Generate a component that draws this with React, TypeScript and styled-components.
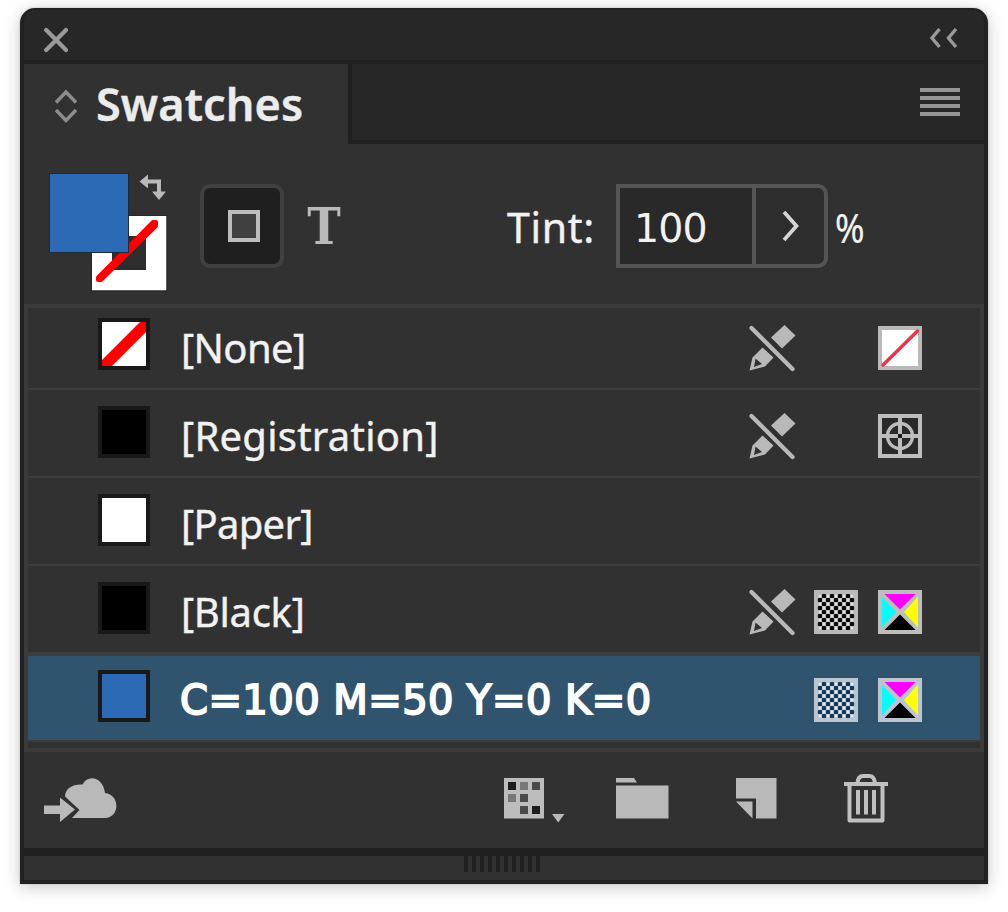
import React from "react";
import styled, { createGlobalStyle, css } from "styled-components";

const GlobalStyle = createGlobalStyle`
  *, *::before, *::after { box-sizing: border-box; }
  html, body { margin: 0; background: #fff; }
  body { font-family: "Noto Sans", "Open Sans", sans-serif; color: #f2f2f2; }
  svg { display: block; flex: none; }
`;

const ICON = "#b9b9b9";

const Stage = styled.main`
  width: 1008px;
  height: 912px;
  padding: 8px 20px 28px;
  overflow: hidden;
`;

const Panel = styled.section`
  display: flex;
  flex-direction: column;
  width: 968px;
  height: 876px;
  border: 4px solid #212121;
  border-top-width: 2px;
  border-radius: 15px 15px 0 0;
  background: #313131;
  box-shadow: 0 3px 17px rgba(0, 0, 0, 0.22), 0 0 2px rgba(0, 0, 0, 0.25);
`;

const TitleBar = styled.header`
  display: flex;
  justify-content: space-between;
  height: 54px;
  padding: 17px 26px 0 20px;
  background: #272727;
  border-bottom: 4px solid #202020;
  border-radius: 12px 12px 0 0;
`;

const TabStrip = styled.div`
  display: flex;
  height: 80px;
`;

const Tab = styled.div`
  display: flex;
  align-items: center;
  gap: 19px;
  width: 324px;
  padding: 3px 0 0 31px;
`;

const TabTitle = styled.h1`
  margin: -3px 0 0;
  font-size: 45px;
  font-weight: 600;
  line-height: 60px;
  letter-spacing: 0.1px;
  color: #ececec;
  -webkit-text-stroke: 0.4px #ececec;
`;

const TabRest = styled.div`
  display: flex;
  flex: 1;
  justify-content: flex-end;
  padding: 23px 23px 0 0;
  background: #272727;
  border-left: 4px solid #1f1f1f;
  border-bottom: 4px solid #202020;
`;

const Controls = styled.div`
  display: flex;
  align-items: flex-start;
  height: 160px;
  padding: 26px 0 0 22px;
`;

const FormatToggle = styled.button`
  display: flex;
  align-items: center;
  justify-content: center;
  width: 84px;
  height: 84px;
  margin: 14px 0 0 30px;
  padding: 0 0 0 3px;
  border: 4px solid #404040;
  border-radius: 10px;
  background: #1f1f1f;
`;

const TextToggle = styled.span`
  width: 40px;
  margin: 27px 0 0 20px;
  font: bold 50px/60px "DejaVu Serif Condensed", "DejaVu Serif", serif;
  font-stretch: condensed;
  text-align: center;
  color: ${ICON};
`;

const Tint = styled.label`
  display: flex;
  align-items: center;
  height: 84px;
  margin: 14px 0 0 162px;
`;

const TintName = styled.span`
  width: 110px;
  padding: 2px 0 0 1px;
  font-size: 41px;
  line-height: 56px;
  letter-spacing: 0.7px;
  -webkit-text-stroke: 0.4px currentColor;
`;

const TintField = styled.span`
  display: flex;
  width: 212px;
  height: 84px;
  border: 4px solid #555;
  border-radius: 0 10px 10px 0;
  background: #2d2d2d;
`;

const TintValue = styled.span`
  width: 136px;
  height: 76px;
  padding: 2px 0 0 14px;
  border-right: 4px solid #555;
  background: #292929;
  font: 39.5px/76px "DejaVu Sans", sans-serif;
  letter-spacing: -0.9px;
`;

const TintStep = styled.span`
  display: flex;
  flex: 1;
  align-items: center;
  justify-content: center;
`;

const Percent = styled.span`
  padding-top: 3px;
  margin-left: 7px;
  font-size: 40px;
  line-height: 56px;
  transform: scaleX(0.89);
  transform-origin: left;
  -webkit-text-stroke: 0.2px currentColor;
`;

const List = styled.ul`
  height: 448px;
  margin: 0;
  padding: 0;
  border: 4px solid #3b3b3b;
  list-style: none;
`;

const Row = styled.li<{ $height: number; $rule: number; $selected?: boolean }>`
  display: flex;
  align-items: flex-end;
  height: ${(p) => p.$height}px;
  padding: 0 58px 18px 70px;
  border-bottom: ${(p) => p.$rule}px solid #3d3d3d;
  background: ${(p) => (p.$selected ? "#30546e" : "transparent")};
`;

const Chip = styled.span<{ $color: string }>`
  width: 52px;
  height: 52px;
  border: 4px solid #191919;
  background: ${(p) => p.$color};
`;

const Name = styled.span<{ $spacing: number; $strong?: boolean }>`
  flex: 1;
  margin: 0 0 -1px 31px;
  font-size: 40px;
  line-height: 46px;
  white-space: nowrap;
  letter-spacing: ${(p) => p.$spacing}px;
  -webkit-text-stroke: 0.4px currentColor;
  ${(p) =>
    p.$strong &&
    css`
      margin-left: 30px;
      font-family: "DejaVu Sans", sans-serif;
      color: #fff;
      -webkit-text-stroke: 1.9px #fff;
    `}
`;

const Marks = styled.span`
  display: flex;
  gap: 20px;
`;

const Slot = styled.span`
  width: 44px;
  height: 44px;
`;

const Footer = styled.footer`
  display: flex;
  height: 96px;
  padding: 22px 95px 0 20px;
`;

const FooterActions = styled.div`
  display: flex;
  margin-left: auto;
`;

const FooterAction = styled.span<{ $gap?: number }>`
  margin-left: ${(p) => p.$gap ?? 0}px;
`;

const GripBar = styled.div`
  display: flex;
  flex: 1;
  justify-content: center;
  border-top: 8px solid #202020;
`;

const Grip = styled.div`
  width: 76px;
  height: 16px;
  margin-right: 4px;
  background: repeating-linear-gradient(to right, #202020 0 4px, #313131 4px 8px);
`;

const NoneChipLine = () => (
  <svg width="44" height="44">
    <path d="M0 38L38 0H44V10L10 44H0Z" fill="#f00" />
  </svg>
);

const NoEdit = () => (
  <svg width="44" height="44" fill={ICON} overflow="visible">
    <path d="M34.500 -1L45.500 9.500L32 22.500L21 11.500Z" />
    <path fillRule="evenodd" d="M12.500 21.500L23.500 31.500L15 40.500L-.5 44.500L2.500 31.500ZM5.500 32.500L12 38L4 41Z" />
    <path d="M1.500 1.500L43 43" stroke="#313131" strokeWidth="8" />
    <path d="M1.500 2L42.500 43" stroke={ICON} strokeWidth="4.200" strokeLinecap="round" />
  </svg>
);

const NoneMark = () => (
  <svg width="44" height="44">
    <rect x="2" y="2" width="40" height="40" fill="#fff" stroke={ICON} strokeWidth="4" />
    <path d="M5 39L39.500 5" stroke="#f52f48" strokeWidth="3.400" strokeLinecap="round" />
  </svg>
);

const RegistrationMark = () => (
  <svg width="44" height="44" fill="none" stroke="#bdbdbd">
    <rect x="2" y="2" width="40" height="40" fill="#292929" strokeWidth="4" />
    <circle cx="22" cy="22" r="12.500" strokeWidth="3.400" />
    <path d="M22 2V42M2 22H42" strokeWidth="4" />
    <rect x="20" y="20" width="4" height="4" fill="#1c1c1c" stroke="none" />
  </svg>
);

const checker = Array.from({ length: 81 }, (_, i) => ({ c: i % 9, r: Math.floor(i / 9) }));

const ProcessMark = ({ selected }: { selected?: boolean }) => (
  <svg width="44" height="44">
    <rect width="44" height="44" fill={selected ? "#b9c6d2" : "#b9b9b9"} />
    {checker.map(({ c, r }) =>
      (c + r) % 2 ? (
        <rect key={`${c}-${r}`} x={3.9 + c * 4} y={3.9 + r * 4} width="4.200" height="4.200" rx="1.200" fill={selected ? "#143652" : "#0a0a0a"} />
      ) : (
        <circle key={`${c}-${r}`} cx={6 + c * 4} cy={6 + r * 4} r="1.500" fill={selected ? "#dcebf5" : "#e0e0e0"} />
      )
    )}
  </svg>
);

const CmykMark = ({ selected }: { selected?: boolean }) => (
  <svg width="44" height="44">
    <rect width="44" height="44" fill={selected ? "#bcc5cf" : "#bdbdbd"} />
    <path d="M6.500 4H37.500L22 19.500Z" fill="#f0f" />
    <path d="M4 6.500L18 22L4 37.500Z" fill="#0ff" />
    <path d="M40 6.500L26 22L40 37.500Z" fill="#ff0" />
    <path d="M6.500 40L22 24.500L37.500 40Z" fill="#000" />
  </svg>
);

const FillStroke = () => (
  <svg width="124" height="124">
    <path fillRule="evenodd" d="M46 46H120.500V120.500H46ZM66 66V100H100V66Z" fill="#fff" />
    <path d="M45.500 45.500H121V121H45.500Z" fill="none" stroke="#262626" />
    <rect x="66" y="66" width="34" height="34" fill="#2d2d2d" />
    <path d="M52 110V107.500L107 52H110V56L55 110Z" fill="#f00" stroke="#f00" strokeWidth="4" strokeLinejoin="round" />
    <rect x="3.500" y="3.500" width="79" height="79" fill="#2d6ab5" stroke="#202b38" />
    <path d="M102 11.500H113V25" fill="none" stroke={ICON} strokeWidth="4" />
    <path d="M93.500 11.500L102 4.500V18.500ZM113 30L106 21.500H120Z" fill={ICON} />
  </svg>
);

type Swatch = {
  name: string;
  color: string;
  height: number;
  rule: number;
  spacing: number;
  none?: boolean;
  selected?: boolean;
  marks: React.ReactNode[];
};

const swatches: Swatch[] = [
  { name: "[None]", color: "#fff", height: 82, rule: 2, spacing: -0.6, none: true, marks: [<NoEdit />, null, <NoneMark />] },
  { name: "[Registration]", color: "#000", height: 88, rule: 2, spacing: 0.25, marks: [<NoEdit />, null, <RegistrationMark />] },
  { name: "[Paper]", color: "#fff", height: 88, rule: 2, spacing: -0.7, marks: [] },
  { name: "[Black]", color: "#000", height: 90, rule: 4, spacing: -0.3, marks: [<NoEdit />, <ProcessMark />, <CmykMark />] },
  { name: "C=100 M=50 Y=0 K=0", color: "#2d6ab5", height: 86, rule: 2, spacing: 0.45, selected: true, marks: [<ProcessMark selected />, <CmykMark selected />] },
];

export default function App() {
  return (
    <Stage>
      <GlobalStyle />
      <Panel>
        <TitleBar>
          <svg width="24" height="26" stroke="#9a9a9a" strokeWidth="4.200" strokeLinecap="round">
            <path d="M2.200 3L22 23M22 3L2.200 23" />
          </svg>
          <svg width="28" height="22" fill="none" stroke="#9a9a9a" strokeWidth="3.400">
            <path d="M9.500 2L2 11L9.500 20M26 2L18.500 11L26 20" />
          </svg>
        </TitleBar>
        <TabStrip>
          <Tab>
            <svg width="22" height="34" fill="none" stroke="#8d8d8d" strokeWidth="3.400">
              <path d="M1 13.500L11 3L21 13.500M1 21L11 31.500L21 21" />
            </svg>
            <TabTitle>Swatches</TabTitle>
          </Tab>
          <TabRest>
            <svg width="42" height="32" stroke="#949494" strokeWidth="4">
              <path d="M1 3H41M1 11H41M1 19H41M1 27H41" />
            </svg>
          </TabRest>
        </TabStrip>
        <Controls>
          <FillStroke />
          <FormatToggle>
            <svg width="32" height="32">
              <rect x="2" y="2" width="28" height="28" fill="#404040" stroke="#bdbdbd" strokeWidth="4" />
            </svg>
          </FormatToggle>
          <TextToggle>T</TextToggle>
          <Tint>
            <TintName>Tint:</TintName>
            <TintField>
              <TintValue>100</TintValue>
              <TintStep>
                <svg width="18" height="32" fill="none" stroke="#d5d5d5" strokeWidth="3.800">
                  <path d="M3 2L15.500 16L3 30" />
                </svg>
              </TintStep>
            </TintField>
            <Percent>%</Percent>
          </Tint>
        </Controls>
        <List>
          {swatches.map((s) => (
            <Row key={s.name} $height={s.height} $rule={s.rule} $selected={s.selected}>
              <Chip $color={s.color}>{s.none && <NoneChipLine />}</Chip>
              <Name $spacing={s.spacing} $strong={s.selected}>{s.name}</Name>
              <Marks>
                {s.marks.map((mark, i) => (
                  <Slot key={i}>{mark}</Slot>
                ))}
              </Marks>
            </Row>
          ))}
        </List>
        <Footer>
          <svg width="74" height="52" fill={ICON}>
            <path d="M28 44L35.500 36L21 22.500C21 15 28 10 38.500 10.500C44 0 59 3 61 19C75 20 77 42 62 44Z" />
            <path d="M0 31.500H16V23.500L31 35.500L16 48V40H0Z" />
          </svg>
          <FooterActions>
            <svg width="62" height="52">
              <rect x="0" y="4" width="40" height="40.500" fill="#bdbdbd" />
              <rect x="4" y="8" width="8" height="8" fill="#1f1f1f" />
              <rect x="16" y="8" width="8" height="8" fill="#787878" />
              <rect x="28" y="8" width="8" height="8" fill="#4a4a4a" />
              <rect x="4" y="20" width="8" height="8" fill="#787878" />
              <rect x="16" y="20" width="8" height="8" fill="#4a4a4a" />
              <rect x="16" y="32" width="8" height="8" fill="#4a4a4a" />
              <rect x="28" y="32" width="8" height="8" fill="#1f1f1f" />
              <path d="M48 40H60.500L54.200 48.500Z" fill={ICON} />
            </svg>
            <FooterAction $gap={50}>
              <svg width="53" height="52" fill={ICON}>
                <path d="M0 4H18L21 8.500H0ZM0 11.500H52.500V44.500H0Z" />
              </svg>
            </FooterAction>
            <FooterAction $gap={67}>
              <svg width="41" height="52" fill={ICON}>
                <path d="M0 4H40.500V44.500H20V24.500H0ZM0 27.500H16.500V44.500Z" />
              </svg>
            </FooterAction>
            <FooterAction $gap={66}>
              <svg width="46" height="52" fill="none" stroke="#c0c0c0" strokeWidth="4">
                <path d="M1 10H45M14.500 9Q15 2 20 2H26.500Q31 2 32 9M6.500 10V46.500H39.500V10" strokeLinejoin="round" />
                <path d="M15 16V40.500M23 16V40.500M31 16V40.500" />
              </svg>
            </FooterAction>
          </FooterActions>
        </Footer>
        <GripBar>
          <Grip />
        </GripBar>
      </Panel>
    </Stage>
  );
}
